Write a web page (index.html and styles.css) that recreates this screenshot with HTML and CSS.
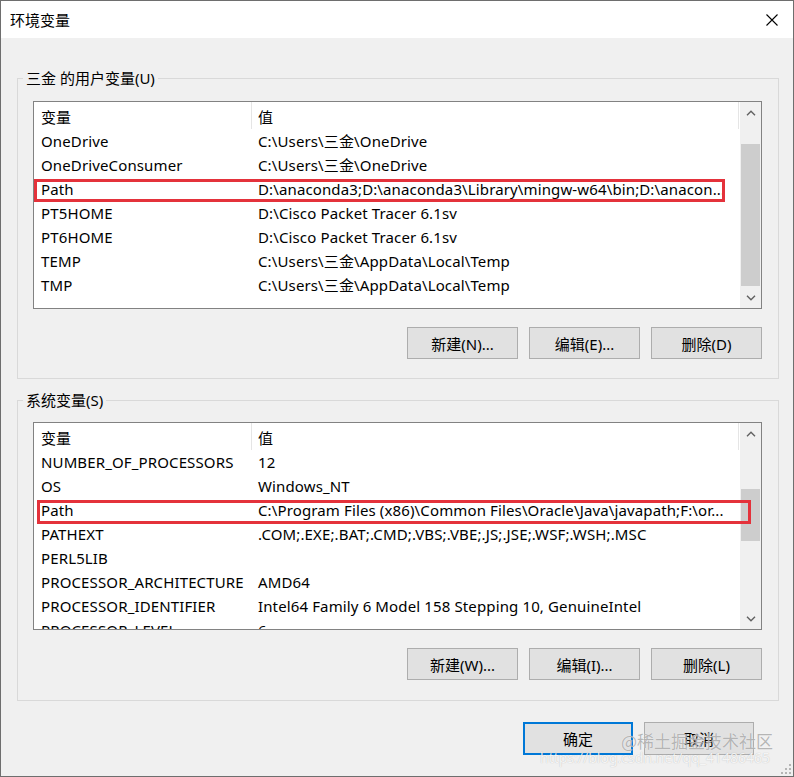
FILE: index.html
```html
<!DOCTYPE html>
<html lang="zh-CN">
<head>
<meta charset="utf-8">
<title>环境变量</title>
<link rel="stylesheet" href="styles.css">
</head>
<body>
<div class="window">
  <div class="titlebar">
    <span class="title">环境变量</span>
    <svg class="close" width="12" height="12" viewBox="0 0 12 12"><path d="M0.5 0.5 L11.5 11.5 M11.5 0.5 L0.5 11.5" stroke="#000" stroke-width="1.1" fill="none"/></svg>
  </div>
  <div class="body">
    <fieldset class="group group-user">
      <legend>三金 的用户变量(U)</legend>
      <div class="listview lv-user">
        <div class="lv-main">
          <div class="lv-header"><div class="c1">变量</div><div class="c2">值</div></div>
          <div class="lv-rows">
            <div class="row"><div class="c1">OneDrive</div><div class="c2">C:\Users\三金\OneDrive</div></div>
            <div class="row"><div class="c1">OneDriveConsumer</div><div class="c2">C:\Users\三金\OneDrive</div></div>
            <div class="row"><div class="c1">Path</div><div class="c2">D:\anaconda3;D:\anaconda3\Library\mingw-w64\bin;D:\anacon...</div></div>
            <div class="row"><div class="c1">PT5HOME</div><div class="c2">D:\Cisco Packet Tracer 6.1sv</div></div>
            <div class="row"><div class="c1">PT6HOME</div><div class="c2">D:\Cisco Packet Tracer 6.1sv</div></div>
            <div class="row"><div class="c1">TEMP</div><div class="c2">C:\Users\三金\AppData\Local\Temp</div></div>
            <div class="row"><div class="c1">TMP</div><div class="c2">C:\Users\三金\AppData\Local\Temp</div></div>
          </div>
        </div>
        <div class="scrollbar">
          <div class="sb-btn"><svg width="10" height="6" viewBox="0 0 10 6"><path d="M1 5.2 L5 1.2 L9 5.2" stroke="#606060" stroke-width="1.4" fill="none"/></svg></div>
          <div class="sb-track"><div class="sb-thumb thumb-user"></div></div>
          <div class="sb-btn"><svg width="10" height="6" viewBox="0 0 10 6"><path d="M1 0.8 L5 4.8 L9 0.8" stroke="#606060" stroke-width="1.4" fill="none"/></svg></div>
        </div>
        <div class="mark mark-user"></div>
      </div>
      <div class="btnrow">
        <button class="btn">新建(N)...</button>
        <button class="btn">编辑(E)...</button>
        <button class="btn">删除(D)</button>
      </div>
    </fieldset>

    <fieldset class="group group-sys">
      <legend>系统变量(S)</legend>
      <div class="listview lv-sys">
        <div class="lv-main">
          <div class="lv-header"><div class="c1">变量</div><div class="c2">值</div></div>
          <div class="lv-rows">
            <div class="row"><div class="c1">NUMBER_OF_PROCESSORS</div><div class="c2">12</div></div>
            <div class="row"><div class="c1">OS</div><div class="c2">Windows_NT</div></div>
            <div class="row"><div class="c1">Path</div><div class="c2">C:\Program Files (x86)\Common Files\Oracle\Java\javapath;F:\or...</div></div>
            <div class="row"><div class="c1">PATHEXT</div><div class="c2">.COM;.EXE;.BAT;.CMD;.VBS;.VBE;.JS;.JSE;.WSF;.WSH;.MSC</div></div>
            <div class="row"><div class="c1">PERL5LIB</div><div class="c2"></div></div>
            <div class="row"><div class="c1">PROCESSOR_ARCHITECTURE</div><div class="c2">AMD64</div></div>
            <div class="row"><div class="c1">PROCESSOR_IDENTIFIER</div><div class="c2">Intel64 Family 6 Model 158 Stepping 10, GenuineIntel</div></div>
            <div class="row"><div class="c1">PROCESSOR_LEVEL</div><div class="c2">6</div></div>
          </div>
        </div>
        <div class="scrollbar">
          <div class="sb-btn"><svg width="10" height="6" viewBox="0 0 10 6"><path d="M1 5.2 L5 1.2 L9 5.2" stroke="#606060" stroke-width="1.4" fill="none"/></svg></div>
          <div class="sb-track"><div class="sb-thumb thumb-sys"></div></div>
          <div class="sb-btn"><svg width="10" height="6" viewBox="0 0 10 6"><path d="M1 0.8 L5 4.8 L9 0.8" stroke="#606060" stroke-width="1.4" fill="none"/></svg></div>
        </div>
        <div class="mark mark-sys"></div>
      </div>
      <div class="btnrow">
        <button class="btn">新建(W)...</button>
        <button class="btn">编辑(I)...</button>
        <button class="btn">删除(L)</button>
      </div>
    </fieldset>

    <div class="footer">
      <button class="btn btn-primary">确定</button>
      <button class="btn">取消</button>
    </div>
  </div>
  <div class="watermark">
    <div class="wm1">@稀土掘金技术社区</div>
    <div class="wm2">https://blog.csdn.net/qq_41486465</div>
  </div>
  <svg class="grip" width="10" height="10" viewBox="0 0 10 10"><g fill="#b5b5b5"><rect x="8" y="0" width="2" height="2"/><rect x="4" y="4" width="2" height="2"/><rect x="8" y="4" width="2" height="2"/><rect x="0" y="8" width="2" height="2"/><rect x="4" y="8" width="2" height="2"/><rect x="8" y="8" width="2" height="2"/></g></svg>
</div>
</body>
</html>
```

FILE: styles.css
```css
* { box-sizing: border-box; }
html, body { margin: 0; padding: 0; background: #f0f0f0; }
body {
  font-family: "Noto Sans", "Noto Sans CJK SC", sans-serif;
  font-size: 15px;
  color: #000;
}
.window {
  position: relative;
  width: 794px;
  height: 777px;
  border: 1px solid #6e6e6e;
  background: #f0f0f0;
  overflow: hidden;
}
.titlebar {
  height: 37px;
  background: #fff;
  display: flex;
  align-items: center;
  justify-content: space-between;
  padding: 0 15px 0 9px;
}
.title { font-family: "Noto Sans CJK SC", sans-serif; font-size: 15px; line-height: 20px; }
.close { display: block; }
.body {
  padding-top: 30px;
}
.group {
  margin: 0 0 0 16px;
  width: 762px;
  border: 1px solid #d9d9d9;
  padding: 13px 15px 19px 15px;
  min-width: 0;
}
.group legend {
  margin-left: -10px;
  padding: 0 3px;
  line-height: 20px;
  font-size: 15px;
}
.group-sys { margin-top: 11px; padding-top: 12px; padding-bottom: 20px; }
.listview {
  position: relative;
  width: 729px;
  height: 208px;
  border: 1px solid #828282;
  background: #fff;
  display: flex;
}
.lv-main {
  width: 706px;
  display: flex;
  flex-direction: column;
  overflow: hidden;
}
.lv-header {
  display: grid;
  grid-template-columns: 218px 487px;
  height: 27px;
  flex: none;
}
.lv-header .c1,
.lv-header .c2 {
  border-right: 1px solid #e5e5e5;
  line-height: 24px;
  padding-top: 3px;
  height: 27px;
}
.lv-header .c1 { padding-left: 7px; }
.lv-header .c2 { padding-left: 6px; }
.lv-rows { overflow: hidden; flex: 1; }
.row {
  display: grid;
  grid-template-columns: 218px 1fr;
  height: 24px;
  line-height: 24px;
  letter-spacing: 0.13px;
}
.row .c1 { padding-left: 7px; white-space: nowrap; overflow: hidden; }
.row .c2 { padding-left: 6px; white-space: nowrap; overflow: hidden; }
.scrollbar {
  width: 21px;
  background: #f0f0f0;
  display: flex;
  flex-direction: column;
}
.sb-btn {
  height: 21px;
  flex: none;
  display: flex;
  align-items: center;
  justify-content: center;
}
.sb-track { flex: 1; }
.sb-thumb { background: #cdcdcd; margin: 0 1px; }
.thumb-user { margin-top: 21px; height: 142px; }
.thumb-sys { margin-top: 45px; height: 52px; }
.mark {
  position: absolute;
  border: 3px solid #e4323b;
}
.mark-user { left: 0; top: 77px; width: 691px; height: 23px; }
.mark-sys { left: 3px; top: 77px; width: 714px; height: 24px; }
.btnrow {
  display: flex;
  justify-content: flex-end;
  gap: 11px;
  margin-top: 18px;
  padding-right: 1px;
}
.btn {
  width: 111px;
  height: 32px;
  background: #e1e1e1;
  border: 1px solid #adadad;
  font-family: "Noto Sans", "Noto Sans CJK SC", sans-serif;
  font-size: 15px;
  color: #000;
  padding: 0;
  margin: 0;
}
.footer {
  display: flex;
  justify-content: flex-end;
  gap: 11px;
  margin-top: 21px;
  padding-right: 39px;
}
.footer .btn { width: 110px; height: 33px; }
.btn-primary { border: 2px solid #0078d7; }
.watermark {
  position: absolute;
  right: 0;
  bottom: 0;
  width: 260px;
  height: 50px;
  pointer-events: none;
}
.wm1 {
  position: absolute;
  left: 88px;
  top: 4px;
  font-family: "Noto Sans CJK SC", sans-serif;
  font-size: 17px;
  line-height: 22px;
  color: rgba(150,150,150,0.7);
  text-shadow: 0 0 1px rgba(255,255,255,0.9);
}
.wm2 {
  position: absolute;
  left: 7px;
  top: 23px;
  font-family: "Noto Sans", sans-serif;
  font-size: 14px;
  line-height: 18px;
  color: rgba(255,255,255,0.85);
  text-shadow: 0 0 1px rgba(0,0,0,0.25);
  white-space: nowrap;
}
.grip { position: absolute; right: 2px; bottom: 2px; }
```
